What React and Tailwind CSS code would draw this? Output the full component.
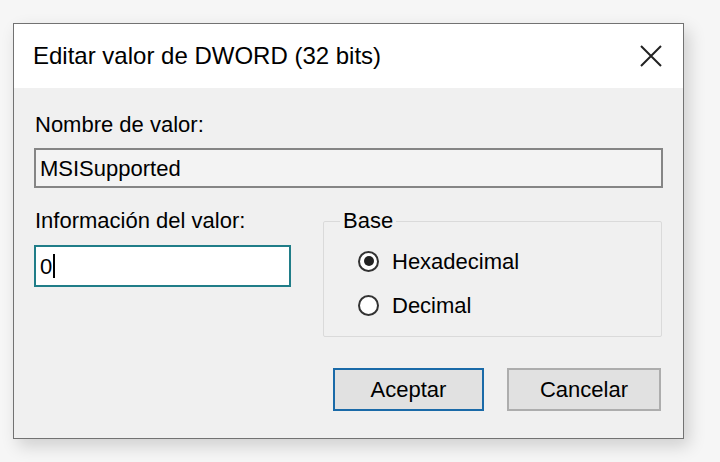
export default function App() {
  return (
    <div className="w-[720px] h-[462px] bg-[#f6f6f6] pl-[13px] pt-[23px] font-['Liberation_Sans',Arial,sans-serif] text-black overflow-hidden">
      <div className="w-[671px] h-[416px] border border-[#727272] bg-[#f0f0f0] shadow-[5px_7px_16px_rgba(0,0,0,0.16)] flex flex-col">
        <div className="h-[64px] bg-white flex items-center justify-between pl-[19px] pr-[20px]">
          <span className="text-[24px] leading-none">Editar valor de DWORD (32 bits)</span>
          <svg width="24" height="24" viewBox="0 0 24 24" className="block">
            <path d="M2 2 L22 22 M22 2 L2 22" stroke="#222" strokeWidth="2" fill="none" />
          </svg>
        </div>
        <div className="flex-1 px-[20px] pt-[23px]">
          <div className="text-[22px] leading-[28px] pl-[1px]">Nombre de valor:</div>
          <div className="mt-[9px] h-[40px] w-full border-2 border-[#858585] bg-[#f3f3f3] flex items-center pl-[4px] text-[22px]">
            MSISupported
          </div>
          <div className="mt-[19px] flex">
            <div className="w-[257px]">
              <div className="text-[22px] leading-[28px] pl-[1px]">Información del valor:</div>
              <div className="mt-[10px] h-[42px] w-full border-2 border-[#207d88] bg-white flex items-center pl-[4px] text-[22px]">
                <span>0</span>
                <span className="inline-block w-[2px] h-[24px] bg-black ml-[1px]" />
              </div>
            </div>
            <fieldset className="ml-[32px] w-[339px] border border-[#dadada] rounded-[2px] pl-[16px] pb-[17px]">
              <legend className="text-[22px] leading-[28px] px-[3px]">Base</legend>
              <div className="mt-[12px] ml-[18px] flex items-center h-[28px] gap-[13px]">
                <span className="w-[21px] h-[21px] rounded-full border-2 border-[#333] bg-white flex items-center justify-center">
                  <span className="w-[10px] h-[10px] rounded-full bg-[#222]" />
                </span>
                <span className="text-[22px]">Hexadecimal</span>
              </div>
              <div className="mt-[16px] ml-[18px] flex items-center h-[28px] gap-[13px]">
                <span className="w-[21px] h-[21px] rounded-full border-2 border-[#333] bg-white" />
                <span className="text-[22px]">Decimal</span>
              </div>
            </fieldset>
          </div>
          <div className="mt-[31px] flex justify-end gap-[23px] mr-[2px]">
            <button className="w-[151px] h-[43px] border-2 border-[#1a6aa8] bg-[#e1e1e1] text-[22px] flex items-center justify-center">
              Aceptar
            </button>
            <button className="w-[154px] h-[43px] border-2 border-[#adadad] bg-[#e1e1e1] text-[22px] flex items-center justify-center">
              Cancelar
            </button>
          </div>
        </div>
      </div>
    </div>
  );
}
